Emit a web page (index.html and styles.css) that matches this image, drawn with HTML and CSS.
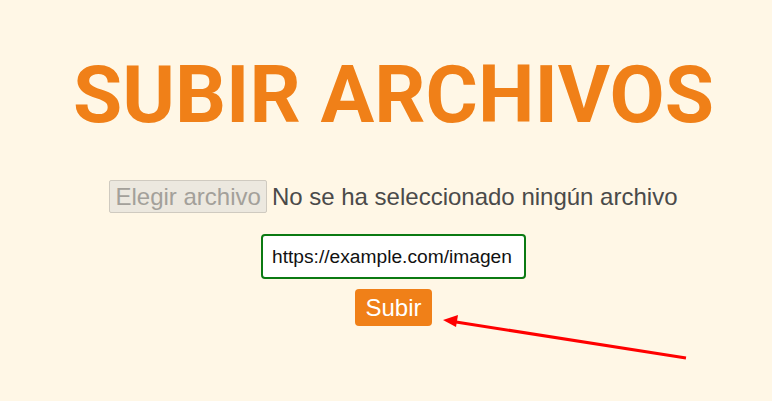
FILE: index.html
```html
<!DOCTYPE html>
<html lang="es">
<head>
<meta charset="utf-8">
<link rel="stylesheet" href="styles.css">
</head>
<body>
<main class="page">
  <h1 class="title">SUBIR ARCHIVOS</h1>
  <form class="upload">
    <div class="file-row">
      <span class="file-btn">Elegir archivo</span>
      <span class="file-text">No se ha seleccionado ningún archivo</span>
    </div>
    <input class="url" type="text" value="https://example.com/imagen">
    <button class="submit" type="button">Subir</button>
  </form>
  <svg class="arrow" width="772" height="401" viewBox="0 0 772 401">
    <line x1="686" y1="358" x2="456" y2="322" stroke="#ff0000" stroke-width="3"/>
    <polygon points="443,320 458,315 456,327" fill="#ff0000"/>
  </svg>
</main>
</body>
</html>
```
FILE: styles.css
```css
html, body {
  margin: 0;
  padding: 0;
  background: #fff7e6;
}
.page {
  position: relative;
  box-sizing: border-box;
  width: 772px;
  height: 401px;
  padding-left: 15px;
  overflow: hidden;
  text-align: center;
  font-family: "Liberation Sans", Arial, sans-serif;
}
.title {
  margin: 47px 0 0;
  font-family: Roboto, sans-serif;
  font-weight: 700;
  font-size: 80px;
  line-height: 96px;
  color: #f08018;
}
.upload {
  display: flex;
  flex-direction: column;
  align-items: center;
  margin-top: 37px;
}
.file-row {
  display: flex;
  align-items: center;
  gap: 5px;
  font-size: 24px;
  color: #4a4a4a;
}
.file-btn {
  box-sizing: border-box;
  height: 33px;
  line-height: 31px;
  padding: 0 5px;
  border: 1px solid #cfcac0;
  border-radius: 2px;
  background: #ece8df;
  color: #a3a09a;
}
.file-text {
  line-height: 33px;
}
.url {
  box-sizing: border-box;
  margin-top: 21px;
  width: 265px;
  height: 45px;
  padding: 0 9px;
  border: 2px solid #0b7a12;
  border-radius: 4px;
  background: #fff;
  font-family: "Liberation Sans", Arial, sans-serif;
  font-size: 19.2px;
  color: #111;
  outline: none;
}
.submit {
  box-sizing: border-box;
  margin-top: 10px;
  height: 37px;
  padding: 0 10px;
  border: none;
  border-radius: 4px;
  background: #f08018;
  color: #fff;
  font-family: "Liberation Sans", Arial, sans-serif;
  font-size: 24px;
}
.arrow {
  position: absolute;
  left: 0;
  top: 0;
}
```
